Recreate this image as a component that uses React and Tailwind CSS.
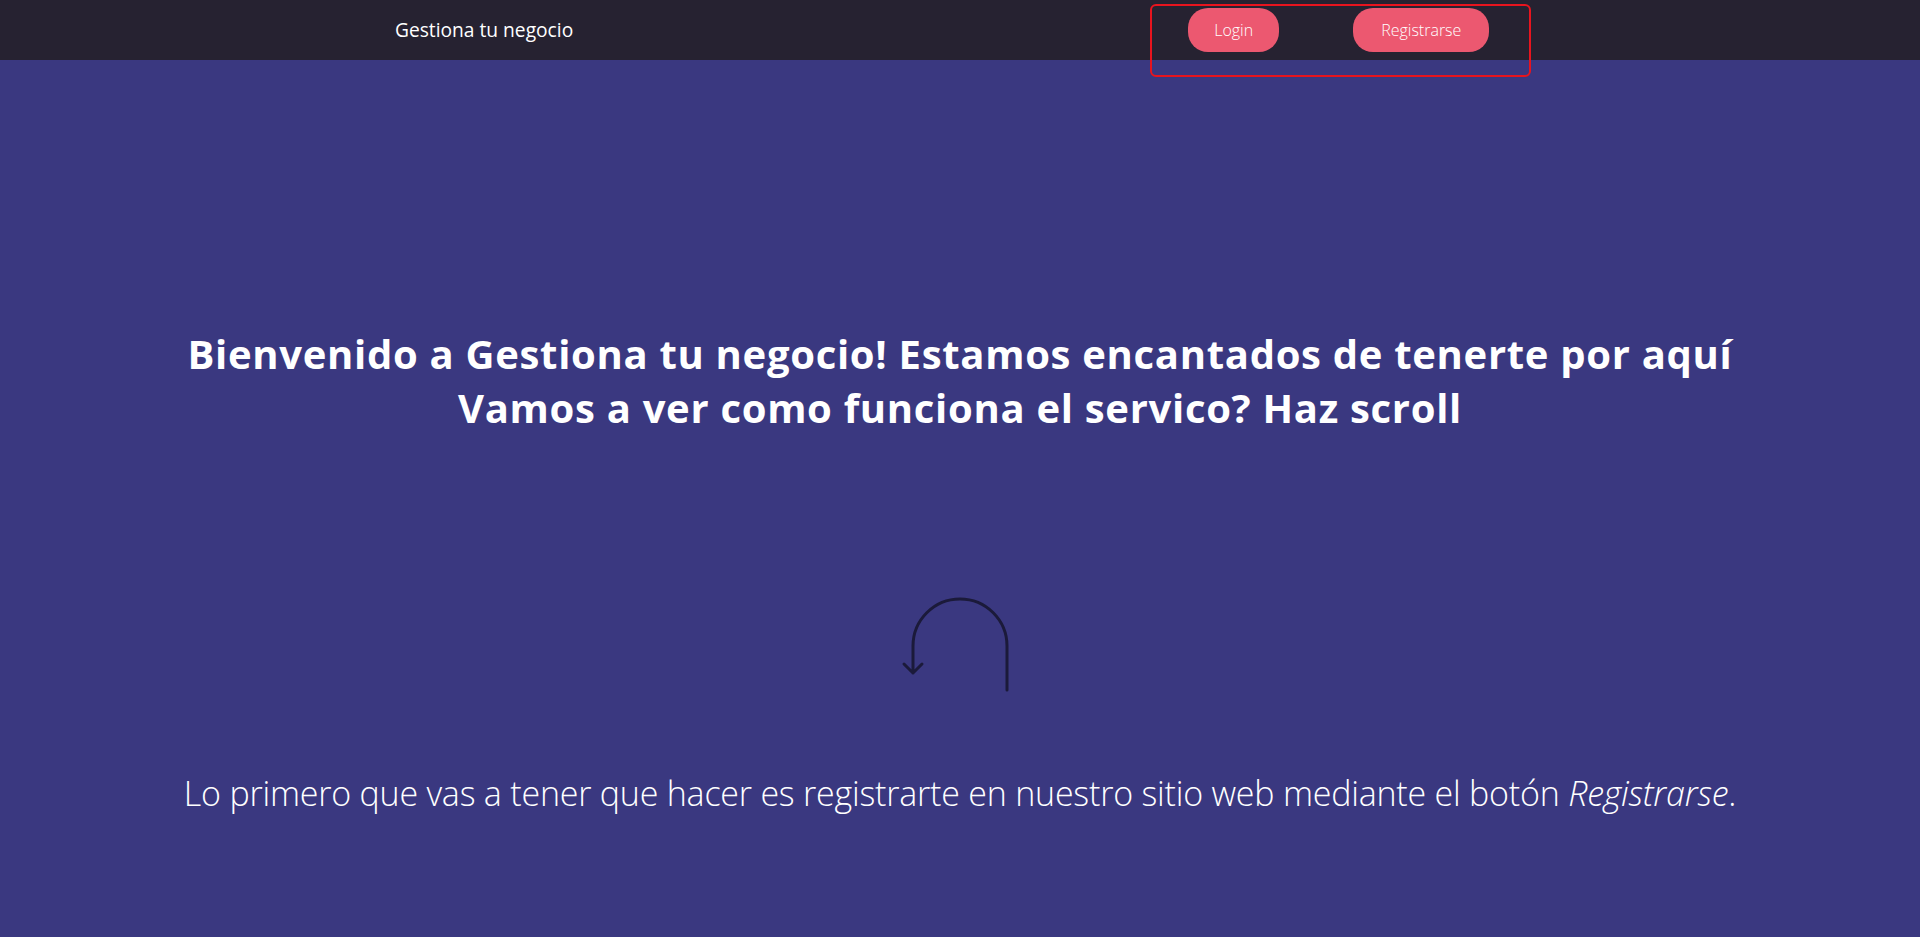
function UturnArrow() {
  return (
    <svg width="120" height="100" viewBox="0 0 120 100" fill="none" className="text-[#1b1a3a]">
      <path
        d="M107 95 V51 A47 47 0 0 0 13 51 V78 M4 69 L13 78 L22 69"
        stroke="currentColor"
        strokeWidth="3"
        strokeLinecap="round"
        strokeLinejoin="round"
      />
    </svg>
  );
}

export default function App() {
  return (
    <div className="min-h-[937px] bg-[#3a3880] font-['Open_Sans',sans-serif] text-white">
      {/* Top bar */}
      <header className="relative flex h-[60px] items-center bg-[#262231] pl-[395px]">
        <span className="text-[19.2px] leading-none">Gestiona tu negocio</span>
        <nav className="ml-[615px] flex items-center gap-[74px]">
          <button className="h-11 rounded-[20px] bg-[#ec5870] px-[26px] text-[16px] font-light text-white">
            Login
          </button>
          <button className="h-11 rounded-[20px] bg-[#ec5870] px-[28px] text-[16px] font-light text-white">
            Registrarse
          </button>
        </nav>
        {/* highlight box around the auth buttons */}
        <div className="pointer-events-none absolute left-[1150px] top-[4px] h-[73px] w-[381px] rounded-md border-2 border-[#e8141e]" />
      </header>

      {/* Intro */}
      <main className="flex flex-col items-center pt-[267px] pb-20">
        <h1 className="text-center text-[40px] font-bold leading-[54px] tracking-[0.7px]">
          Bienvenido a Gestiona tu negocio! Estamos encantados de tenerte por aquí
          <br />
          Vamos a ver como funciona el servico? Haz scroll
        </h1>
        <div className="mt-[160px]">
          <UturnArrow />
        </div>
        <p className="mt-[74px] text-center text-[34px] font-light leading-[48px] tracking-[-0.22px]">
          Lo primero que vas a tener que hacer es registrarte en nuestro sitio web mediante el botón <i>Registrarse</i>.
        </p>
      </main>
    </div>
  );
}
